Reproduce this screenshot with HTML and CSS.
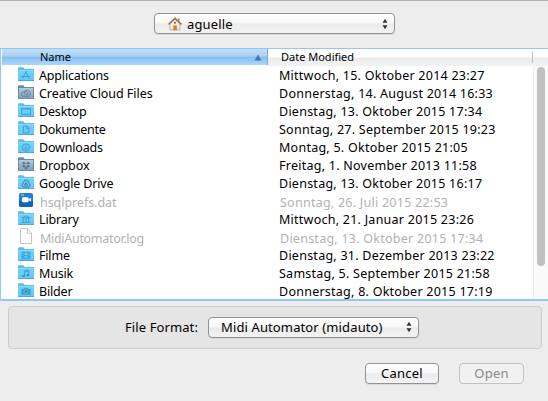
FILE: index.html
```
<!DOCTYPE html>
<html lang="de">
<head>
<meta charset="utf-8">
<title>Open</title>
<link rel="stylesheet" href="styles.css">
</head>
<body>
<svg class="defs" width="0" height="0">
  <defs>
    <linearGradient id="blue" x2="0" y2="1"><stop offset="0" stop-color="#72d1fa"/><stop offset="1" stop-color="#62c8f8"/></linearGradient>
    <linearGradient id="steel" x2="0" y2="1"><stop offset="0" stop-color="#b0c6d9"/><stop offset="1" stop-color="#809fba"/></linearGradient>
    <symbol id="folder" viewBox="0 0 16 15">
      <path d="M0 1.2Q0 .3 1 .3H5.3L6.8 2H16V14H0Z" fill="#5fbce3"/>
      <path d="M0 3.5H16V14H0Z" fill="url(#blue)"/>
      <path d="M0 3.5H16" stroke="#8bdcfa"/><path d="M0 13.5H16" stroke="#4bacd8"/>
    </symbol>
    <symbol id="folder-steel" viewBox="0 0 16 15">
      <path d="M0 1.2Q0 .3 1 .3H5.3L6.8 2H16V14H0Z" fill="#6b89a3"/>
      <path d="M.5 3.5H15.5V13.5H.5Z" fill="url(#steel)" stroke="#6b89a3"/>
      <path d="M1 3.5H15" stroke="#b4cadb"/>
    </symbol>
  </defs>
</svg>
<main class="dialog">
  <div class="location">
    <div class="select select-location">
      <svg class="home" viewBox="0 0 14 14"><path d="M2 6.5 7 2l5 4.500V13H2Z" fill="#eceef0" stroke="#9ba0a5" stroke-width=".7"/><path d="M9.800 1.500h1.600v3H9.800Z" fill="#b98550"/><path d="M.6 7.400 7 1.400l6.400 6" fill="none" stroke="#a9713b" stroke-width="1.500"/><path d="M5.200 8.400h3.700v4.800H5.200Z" fill="#ee7d16"/><circle cx="7" cy="5.700" r="1" fill="#526273"/></svg>
      <span class="label t-user">aguelle</span>
      <svg class="arrows" viewBox="0 0 6 12"><path d="M3 .8 5.500 4.800H.5ZM3 11.200 .5 7.200H5.500Z" fill="#333"/></svg>
    </div>
  </div>
  <section class="files">
    <div class="head">
      <div class="head-name"><span class="t-name">Name</span><svg class="sort" viewBox="0 0 8 7"><path d="M4 .5 7.500 6.500H.5Z" fill="#4977ad"/></svg></div>
      <div class="head-date"><span class="t-date">Date Modified</span></div>
    </div>
    <div class="body">
      <div class="rows">
        <div class="row"><svg class="icon" viewBox="0 0 16 15"><use href="#folder"/><path class="glyph" d="M4.500 11.500 8 5l3.500 6.500M3.500 9.500h9M7 4.800h2"/></svg><span class="file">Applications</span><span class="date">Mittwoch, 15. Oktober 2014 23:27</span></div>
        <div class="row"><svg class="icon" viewBox="0 0 16 15"><use href="#folder-steel"/><path class="glyph steel" d="M6 11.200A2.200 2.200 0 1 1 6.300 7a3.200 3.200 0 1 1 4.300 4.200H6M6.200 9.300A2 2 0 1 1 9 10.200L6.700 7.700"/></svg><span class="file wide">Creative Cloud Files</span><span class="date">Donnerstag, 14. August 2014 16:33</span></div>
        <div class="row"><svg class="icon" viewBox="0 0 16 15"><use href="#folder"/><path class="glyph" d="M3.500 5.500h9v6h-9ZM3.500 6h9"/></svg><span class="file">Desktop</span><span class="date">Dienstag, 13. Oktober 2015 17:34</span></div>
        <div class="row"><svg class="icon" viewBox="0 0 16 15"><use href="#folder"/><path class="glyph" d="M5.500 4.900H9l2 2v5H5.500ZM8.700 5v2.300H11"/></svg><span class="file tight">Dokumente</span><span class="date">Sonntag, 27. September 2015 19:23</span></div>
        <div class="row"><svg class="icon" viewBox="0 0 16 15"><use href="#folder"/><circle class="glyph" cx="8" cy="8.500" r="3.700"/><path class="glyph" d="M8 6v4.500M6.200 8.800 8 10.600l1.800-1.800"/></svg><span class="file">Downloads</span><span class="date">Montag, 5. Oktober 2015 21:05</span></div>
        <div class="row"><svg class="icon" viewBox="0 0 16 15"><use href="#folder-steel"/><path d="m5.800 4.800 2.200 1.400-2.200 1.400-2-1.400ZM10.200 4.800l2 1.400-2 1.400L8 6.200ZM5.800 7.800 8 9.200l-2.200 1.200-2-1.300ZM10.200 7.800l2 1.300-2 1.300L8 9.200ZM6 11l2-1.200 2 1.200-2 1.300Z" fill="#5a7c99"/></svg><span class="file wide">Dropbox</span><span class="date">Freitag, 1. November 2013 11:58</span></div>
        <div class="row"><svg class="icon" viewBox="0 0 16 15"><use href="#folder"/><path class="glyph drive" d="M6.800 5.200h2.400l3 5-1.200 1.900H5l-1.200-1.900ZM8 7.300l1.600 2.800H6.400Z"/></svg><span class="file">Google Drive</span><span class="date">Dienstag, 13. Oktober 2015 16:17</span></div>
        <div class="row off"><svg class="icon" viewBox="0 0 16 15"><rect x="1" y="0" width="14" height="14" rx="2" fill="#247bd8"/><path d="M1 8h14v4q0 2-2 2H3q-2 0-2-2Z" fill="#1261bd"/><rect x="4" y="4.300" width="6.500" height="5" rx="1" fill="#fff"/><path d="m10 6.800 3-2v4Z" fill="#fff"/><path d="M3 2h3" stroke="#68dd72" stroke-width="1.600"/></svg><span class="file">hsqlprefs.dat</span><span class="date">Sonntag, 26. Juli 2015 22:53</span></div>
        <div class="row"><svg class="icon" viewBox="0 0 16 15"><use href="#folder"/><path class="glyph" d="m3.800 6.800 4.200-2 4.200 2ZM5.300 7v4M8 7v4M10.700 7v4M3.500 11.500h9"/></svg><span class="file">Library</span><span class="date">Mittwoch, 21. Januar 2015 23:26</span></div>
        <div class="row off"><svg class="icon" viewBox="0 0 16 15"><path d="M2.500-.5h7L13.500 4v10.500h-11ZM9.300-.3V4.300h4" fill="#fff" stroke="#c5c5c5"/></svg><span class="file tight">MidiAutomator.log</span><span class="date">Dienstag, 13. Oktober 2015 17:34</span></div>
        <div class="row"><svg class="icon" viewBox="0 0 16 15"><use href="#folder"/><path class="glyph" d="M4 5.200h8v6.600H4ZM6 5v7M10 5v7M6 8.500h4M4 7.400h2M4 9.600h2M10 7.400h2M10 9.600h2"/></svg><span class="file">Filme</span><span class="date">Dienstag, 31. Dezember 2013 23:22</span></div>
        <div class="row"><svg class="icon" viewBox="0 0 16 15"><use href="#folder"/><path class="glyph" d="M6.600 11V5.800l4.200-.9v5.200M6.600 6.800l4.200-.9"/><ellipse cx="5.600" cy="11" rx="1.500" ry="1.100" fill="#278dc4"/><ellipse cx="9.800" cy="10.200" rx="1.500" ry="1.100" fill="#278dc4"/></svg><span class="file">Musik</span><span class="date">Samstag, 5. September 2015 21:58</span></div>
        <div class="row"><svg class="icon" viewBox="0 0 16 15"><use href="#folder"/><path d="M3.300 6h2.500l.8-1.300h3L10.400 6h2.300v5.700H3.300Z" fill="#389fd1"/><circle cx="8" cy="8.600" r="1.900" fill="#2588be" stroke="#74d0f5" stroke-width=".7"/></svg><span class="file">Bilder</span><span class="date">Donnerstag, 8. Oktober 2015 17:19</span></div>
      </div>
      <div class="scrollbar"><div class="thumb"></div></div>
    </div>
  </section>
  <section class="format">
    <span class="label t-format">File Format:</span>
    <div class="select select-format">
      <span class="label t-midi">Midi Automator (midauto)</span>
      <svg class="arrows" viewBox="0 0 6 12"><path d="M3 .8 5.500 4.800H.5ZM3 11.200 .5 7.200H5.500Z" fill="#333"/></svg>
    </div>
  </section>
  <footer class="actions">
    <button class="button cancel">Cancel</button>
    <button class="button open" disabled>Open</button>
  </footer>
</main>
</body>
</html>
```
FILE: styles.css
```
* { box-sizing: border-box; }
body { margin: 0; background: #ededed; color: #000; font: 13px/18px "Noto Sans", "Open Sans", sans-serif; }
.defs { display: block; height: 0; }
.dialog { width: 548px; height: 401px; overflow: hidden; border-top: 1px solid #b3b3b3; display: flex; flex-direction: column; }
.location { height: 47px; padding: 12px 0 0 154px; flex: none; }
.select { height: 21px; display: flex; align-items: center; border: 1px solid #929292; border-radius: 4px; background: linear-gradient(#fff, #f7f7f7 48%, #ebebeb 52%, #f2f2f2); box-shadow: 0 1px 0 #d8d8d8; white-space: nowrap; }
.select-location { width: 241px; padding: 0 6px 0 13px; }
.home { width: 14px; height: 14px; margin-right: 5px; }
.t-user { letter-spacing: .15px; }
.arrows { width: 6px; height: 12px; margin-left: auto; }
.files { height: 253px; flex: none; border: solid #91c8f5; border-width: 1px 0 2px 1px; background: #fff; }
.head { height: 17px; display: flex; font-size: 11px; line-height: 16px; padding-left: 1px; white-space: nowrap; }
.head-name { width: 266px; height: 16px; display: flex; align-items: center; padding: 0 5px 0 38px; background: linear-gradient(#c2dff7, #a9d2f5 45%, #85bdf0 50%, #a9d8fb); border-right: 1px solid #7fa9d3; }
.sort { width: 8px; height: 7px; margin-left: auto; }
.head-date { padding-left: 13px; background: linear-gradient(#fff 45%, #ebebeb 55%, #f3f3f3); position: relative; flex: 1; }
.head-date::after { content: ""; position: absolute; width: 1px; height: 11px; top: 3px; right: 15px; background: #bbb; }
.body { display: flex; height: 233px; overflow: hidden; }
.rows { flex: 1; }
.row { height: 18px; display: grid; grid-template-columns: 21px 240px 1fr; padding-left: 17px; white-space: nowrap; }
.icon { width: 16px; height: 15px; margin-top: 1px; overflow: visible; }
.glyph { fill: none; stroke: #3ba3d8; stroke-width: 1; }
.steel { stroke: #5a7c99; stroke-width: .8; }
.drive { stroke: #3b84ae; }
.file, .date { font-size: 12.5px; line-height: 20px; }
.file { letter-spacing: -.17px; }
.date { letter-spacing: .25px; }
.off { color: #b2b2b2; }
.off .file { letter-spacing: -.05px; }
.file.wide { letter-spacing: -.05px; }
.row .file.tight { letter-spacing: -.3px; }
.off span { position: relative; left: 1px; top: 1px; }
.scrollbar { width: 15px; background: #fafafa; border-left: 1px solid #eee; padding: 1px 0 0 3px; }
.thumb { width: 8px; height: 199px; border-radius: 4px; background: #c1c1c1; }
.format { flex: none; height: 43px; width: 534px; margin: 5px 0 0 8px; padding: 0 0 1px 116px; border: 1px solid #cdcdcd; border-radius: 4px; background: #e5e5e5; display: flex; align-items: center; }
.t-format { width: 83px; letter-spacing: .1px; }
.t-midi { letter-spacing: .12px; }
.select-format { width: 211px; padding: 0 6px 0 12px; }
.actions { display: flex; gap: 20px; padding: 14px 0 0 365px; }
.button { height: 21px; border: 1px solid #929292; border-radius: 4px; background: linear-gradient(#fff, #f7f7f7 48%, #ebebeb 52%, #f4f4f4); padding: 0 0 1px; font: inherit; letter-spacing: .25px; box-shadow: 0 1px 0 #d8d8d8; }
.cancel { width: 74px; color: #000; }
.open { width: 65px; color: #898989; border-color: #c2c2c2; background: #f1f1f1; box-shadow: none; }
```
